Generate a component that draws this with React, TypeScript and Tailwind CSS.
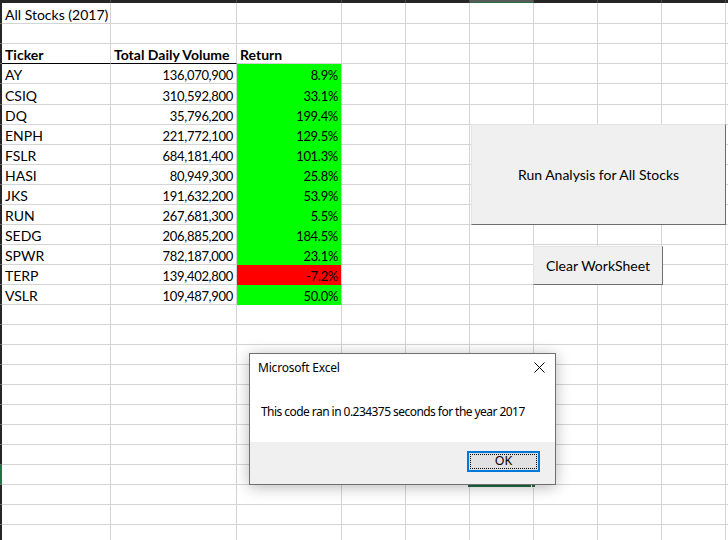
import React from "react";

const COLS = [
  "w-[109px]",
  "w-[126px]",
  "w-[105px]",
  "w-[64px]",
  "w-[64px]",
  "w-[64px]",
  "w-[64px]",
  "w-[64px]",
  "w-[64px]",
  "w-[64px]",
];

const STOCKS = [
  { ticker: "AY", volume: "136,070,900", ret: "8.9%" },
  { ticker: "CSIQ", volume: "310,592,800", ret: "33.1%" },
  { ticker: "DQ", volume: "35,796,200", ret: "199.4%" },
  { ticker: "ENPH", volume: "221,772,100", ret: "129.5%" },
  { ticker: "FSLR", volume: "684,181,400", ret: "101.3%" },
  { ticker: "HASI", volume: "80,949,300", ret: "25.8%" },
  { ticker: "JKS", volume: "191,632,200", ret: "53.9%" },
  { ticker: "RUN", volume: "267,681,300", ret: "5.5%" },
  { ticker: "SEDG", volume: "206,885,200", ret: "184.5%" },
  { ticker: "SPWR", volume: "782,187,000", ret: "23.1%" },
  { ticker: "TERP", volume: "139,402,800", ret: "-7.2%" },
  { ticker: "VSLR", volume: "109,487,900", ret: "50.0%" },
];

type Cell = {
  text?: string;
  bold?: boolean;
  right?: boolean;
  fill?: string;
  bottom?: string;
};

// row heights (incl. the gridline at the bottom)
const rowHeight = (r: number) =>
  r === 1 || r === 5 ? "h-[21px]" : "h-[20px]";

const buildRow = (r: number): Cell[] => {
  const cells: Cell[] = COLS.map(() => ({}));
  if (r === 1) cells[0] = { text: "All Stocks (2017)" };
  if (r === 3) {
    cells[0] = { text: "Ticker", bold: true, bottom: "border-b-black" };
    cells[1] = { text: "Total Daily Volume", bold: true, bottom: "border-b-black" };
    cells[2] = { text: "Return", bold: true };
  }
  const s = STOCKS[r - 4];
  if (s) {
    const red = s.ret.startsWith("-");
    cells[0] = { text: s.ticker };
    cells[1] = { text: s.volume, right: true };
    cells[2] = {
      text: s.ret,
      right: true,
      fill: red ? "bg-[#ff0000]" : "bg-[#00ff00]",
      bottom: red ? "border-b-[#ff0000]" : "border-b-[#00ff00]",
    };
  }
  return cells;
};

const ROWS = Array.from({ length: 27 }, (_, i) => i + 1);

const App = () => {
  return (
    <div className="relative w-[728px] h-[540px] overflow-hidden bg-white font-['Lato',sans-serif] text-[14px] text-black">
      {/* column header strip */}
      <div className="flex h-[3px]">
        <div className="w-[2px] shrink-0 bg-[#262626]" />
        {COLS.map((w, i) => (
          <div
            key={i}
            className={`${w} shrink-0 border-r ${
              i === 5
                ? "bg-[#5a5a5a] border-b border-b-[#217346] border-r-[#4a4a4a]"
                : "bg-[#262626] border-r-[#4a4a4a]"
            }`}
          />
        ))}
      </div>

      {/* sheet rows */}
      {ROWS.map((r) => (
        <div key={r} className={`flex ${rowHeight(r)}`}>
          <div
            className={`w-[2px] shrink-0 border-b border-b-[#6a6a6a] ${
              r === 24 ? "bg-[#217346]" : "bg-[#262626]"
            }`}
          />
          {buildRow(r).map((c, i) => (
            <div
              key={i}
              className={`${COLS[i]} shrink-0 flex items-end whitespace-nowrap leading-[16px] border-r border-b border-[#d4d4d4] ${
                c.right
                  ? "justify-end pr-[3px] text-[13px] tracking-[-0.3px]"
                  : "pl-[3px]"
              } ${c.bold ? "font-bold" : ""} ${c.fill ?? ""} ${c.bottom ?? ""}`}
            >
              {c.text}
            </div>
          ))}
        </div>
      ))}

      {/* macro buttons */}
      <button className="absolute left-[471px] top-[124px] w-[255px] h-[101px] bg-[#f0f0f0] border border-[#e3e3e3] border-r-[#6d6d6d] border-b-[#6d6d6d] text-[14px] flex items-center justify-center">
        Run Analysis for All Stocks
      </button>
      <button className="absolute left-[533px] top-[246px] w-[130px] h-[39px] bg-[#f0f0f0] border border-[#e3e3e3] border-r-[#6d6d6d] border-b-[#6d6d6d] text-[14px] flex items-center justify-center">
        Clear WorkSheet
      </button>

      {/* selected cell F24 */}
      <div className="absolute left-[468px] top-[463px] w-[64px] h-[24px] border-2 border-[#1e6b40]" />
      <div className="absolute left-[531px] top-[483px] w-[5px] h-[5px] bg-[#1e6b40] border border-white" />

      {/* message box */}
      <div className="absolute left-[249px] top-[353px] w-[307px] h-[132px] flex flex-col bg-white border border-[#6f6f6f] shadow-[0_2px_14px_rgba(0,0,0,0.28)] font-['Noto_Sans',sans-serif] text-[12px]">
        <div className="h-[27px] flex items-center justify-between pl-[8px] pr-[10px]">
          <span className="tracking-[-0.2px]">Microsoft Excel</span>
          <svg width="11" height="11" viewBox="0 0 11 11">
            <path d="M0.5 0.5 L10.5 10.5 M10.5 0.5 L0.5 10.5" stroke="#000" strokeWidth="1" fill="none" />
          </svg>
        </div>
        <div className="flex-1 flex items-center pl-[11px] tracking-[-0.55px]">
          This code ran in 0.234375 seconds for the year 2017
        </div>
        <div className="h-[42px] flex justify-end items-start pt-[9px] pr-[15px] bg-[#f0f0f0]">
          <button className="relative w-[73px] h-[21px] border-2 border-[#0078d7] bg-[#e1e1e1] flex items-center justify-center">
            <span className="absolute inset-[1px] border border-dotted border-black" />
            <span className="relative leading-none text-[12.5px]">OK</span>
          </button>
        </div>
      </div>
    </div>
  );
};

export default App;
